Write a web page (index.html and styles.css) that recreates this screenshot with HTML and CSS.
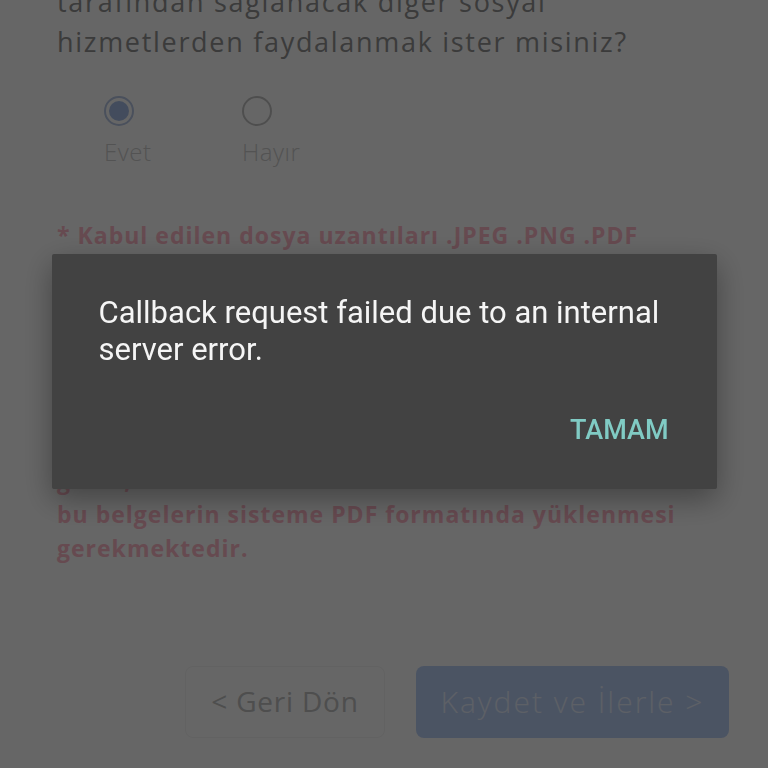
FILE: index.html
```html
<!DOCTYPE html>
<html lang="tr">
<head>
  <meta charset="UTF-8">
  <meta name="viewport" content="width=device-width, initial-scale=1.0">
  <title>Başvuru</title>
  <link rel="stylesheet" href="styles.css">
</head>
<body>

<div class="form-page">
  <p class="question">tarafından sağlanacak diğer sosyal<br>hizmetlerden faydalanmak ister misiniz?</p>

  <div class="radio-group">
    <label class="radio-option">
      <span class="radio checked"></span>
      <span class="radio-label">Evet</span>
    </label>
    <label class="radio-option">
      <span class="radio"></span>
      <span class="radio-label">Hayır</span>
    </label>
  </div>

  <p class="note">* Kabul edilen dosya uzantıları .JPEG .PNG .PDF</p>

  <p class="note note-long">* Birden fazla sayfadan oluşan belgeler için<br>tüm sayfaların tek dosyada birleştirilmesi ve<br>gelen, okunaklı tüm dokümanlarla beraber<br>bu belgelerin sisteme PDF formatında yüklenmesi<br>gerekmektedir.</p>

  <div class="actions">
    <button class="btn btn-back">&lt; Geri Dön</button>
    <button class="btn btn-next">Kaydet ve İlerle &gt;</button>
  </div>
</div>

<div class="scrim">
  <div class="dialog">
    <p class="dialog-message">Callback request failed due to an internal server error.</p>
    <div class="dialog-actions">
      <button class="dialog-btn">TAMAM</button>
    </div>
  </div>
</div>

</body>
</html>
```

FILE: styles.css
```css
body {
  margin: 0;
  padding: 0;
  background-color: #ffffff;
  font-family: "Open Sans", "Noto Sans", sans-serif;
  overflow: hidden;
  height: 768px;
}

/* Form page (under the dim) */
.form-page {
  padding: 0 39px 0 57px;
  margin-top: -18px;
}

.question {
  margin: 0;
  font-size: 27px;
  font-weight: 500;
  line-height: 40px;
  letter-spacing: 1.7px;
  color: #949494;
  white-space: nowrap;
}

.radio-group {
  display: flex;
  padding-left: 47px;
  margin-top: 34px;
}

.radio-option {
  width: 138px;
  display: flex;
  flex-direction: column;
  align-items: flex-start;
  gap: 12px;
}

.radio {
  width: 26px;
  height: 26px;
  border: 2px solid #c4c4c4;
  border-radius: 50%;
  display: flex;
  justify-content: center;
  align-items: center;
}

.radio.checked {
  border-color: #b8c8e6;
}

.radio.checked::after {
  content: "";
  width: 20px;
  height: 20px;
  border-radius: 50%;
  background-color: #a8bfe8;
}

.radio-label {
  font-size: 24px;
  font-weight: 300;
  line-height: 28px;
  letter-spacing: 0.5px;
  color: #cfcfcf;
}

.note {
  margin: 52px 0 0;
  font-size: 23px;
  font-weight: 700;
  line-height: 34px;
  letter-spacing: 1px;
  color: #ffb8c8;
  white-space: nowrap;
}

.note-long {
  margin-top: 143px;
}

.actions {
  display: flex;
  justify-content: flex-end;
  gap: 31px;
  margin-top: 101px;
}

.btn {
  height: 72px;
  border-radius: 8px;
  font-family: "Open Sans", sans-serif;
  cursor: pointer;
}

.btn-back {
  width: 200px;
  background: #ffffff;
  border: 1px solid #f6f6f6;
  color: #c2c2c2;
  font-size: 28px;
  font-weight: 400;
  letter-spacing: 0.8px;
  padding-bottom: 4px;
}

.btn-next {
  width: 313px;
  background-color: #bcd2f8;
  border: none;
  color: #e8f0ff;
  font-size: 30px;
  font-weight: 300;
  letter-spacing: 2px;
  padding-bottom: 2px;
}

/* Dim + dialog */
.scrim {
  position: fixed;
  inset: 0;
  background-color: rgba(0, 0, 0, 0.6);
  display: flex;
  justify-content: center;
  align-items: center;
  padding-bottom: 25px;
}

.dialog {
  width: 665px;
  box-sizing: border-box;
  background-color: #424242;
  border-radius: 2px;
  padding: 40px 48px 41px 47px;
  box-shadow: 0 10px 30px rgba(0, 0, 0, 0.35);
}

.dialog-message {
  margin: 0;
  font-family: Roboto, "Noto Sans", sans-serif;
  font-size: 31px;
  line-height: 37px;
  color: #f5f5f5;
}

.dialog-actions {
  display: flex;
  justify-content: flex-end;
  margin-top: 44px;
}

.dialog-btn {
  background: transparent;
  border: none;
  padding: 0;
  font-family: Roboto, sans-serif;
  font-size: 27px;
  font-weight: 500;
  line-height: 36px;
  color: #80cbc4;
  cursor: pointer;
}
```
